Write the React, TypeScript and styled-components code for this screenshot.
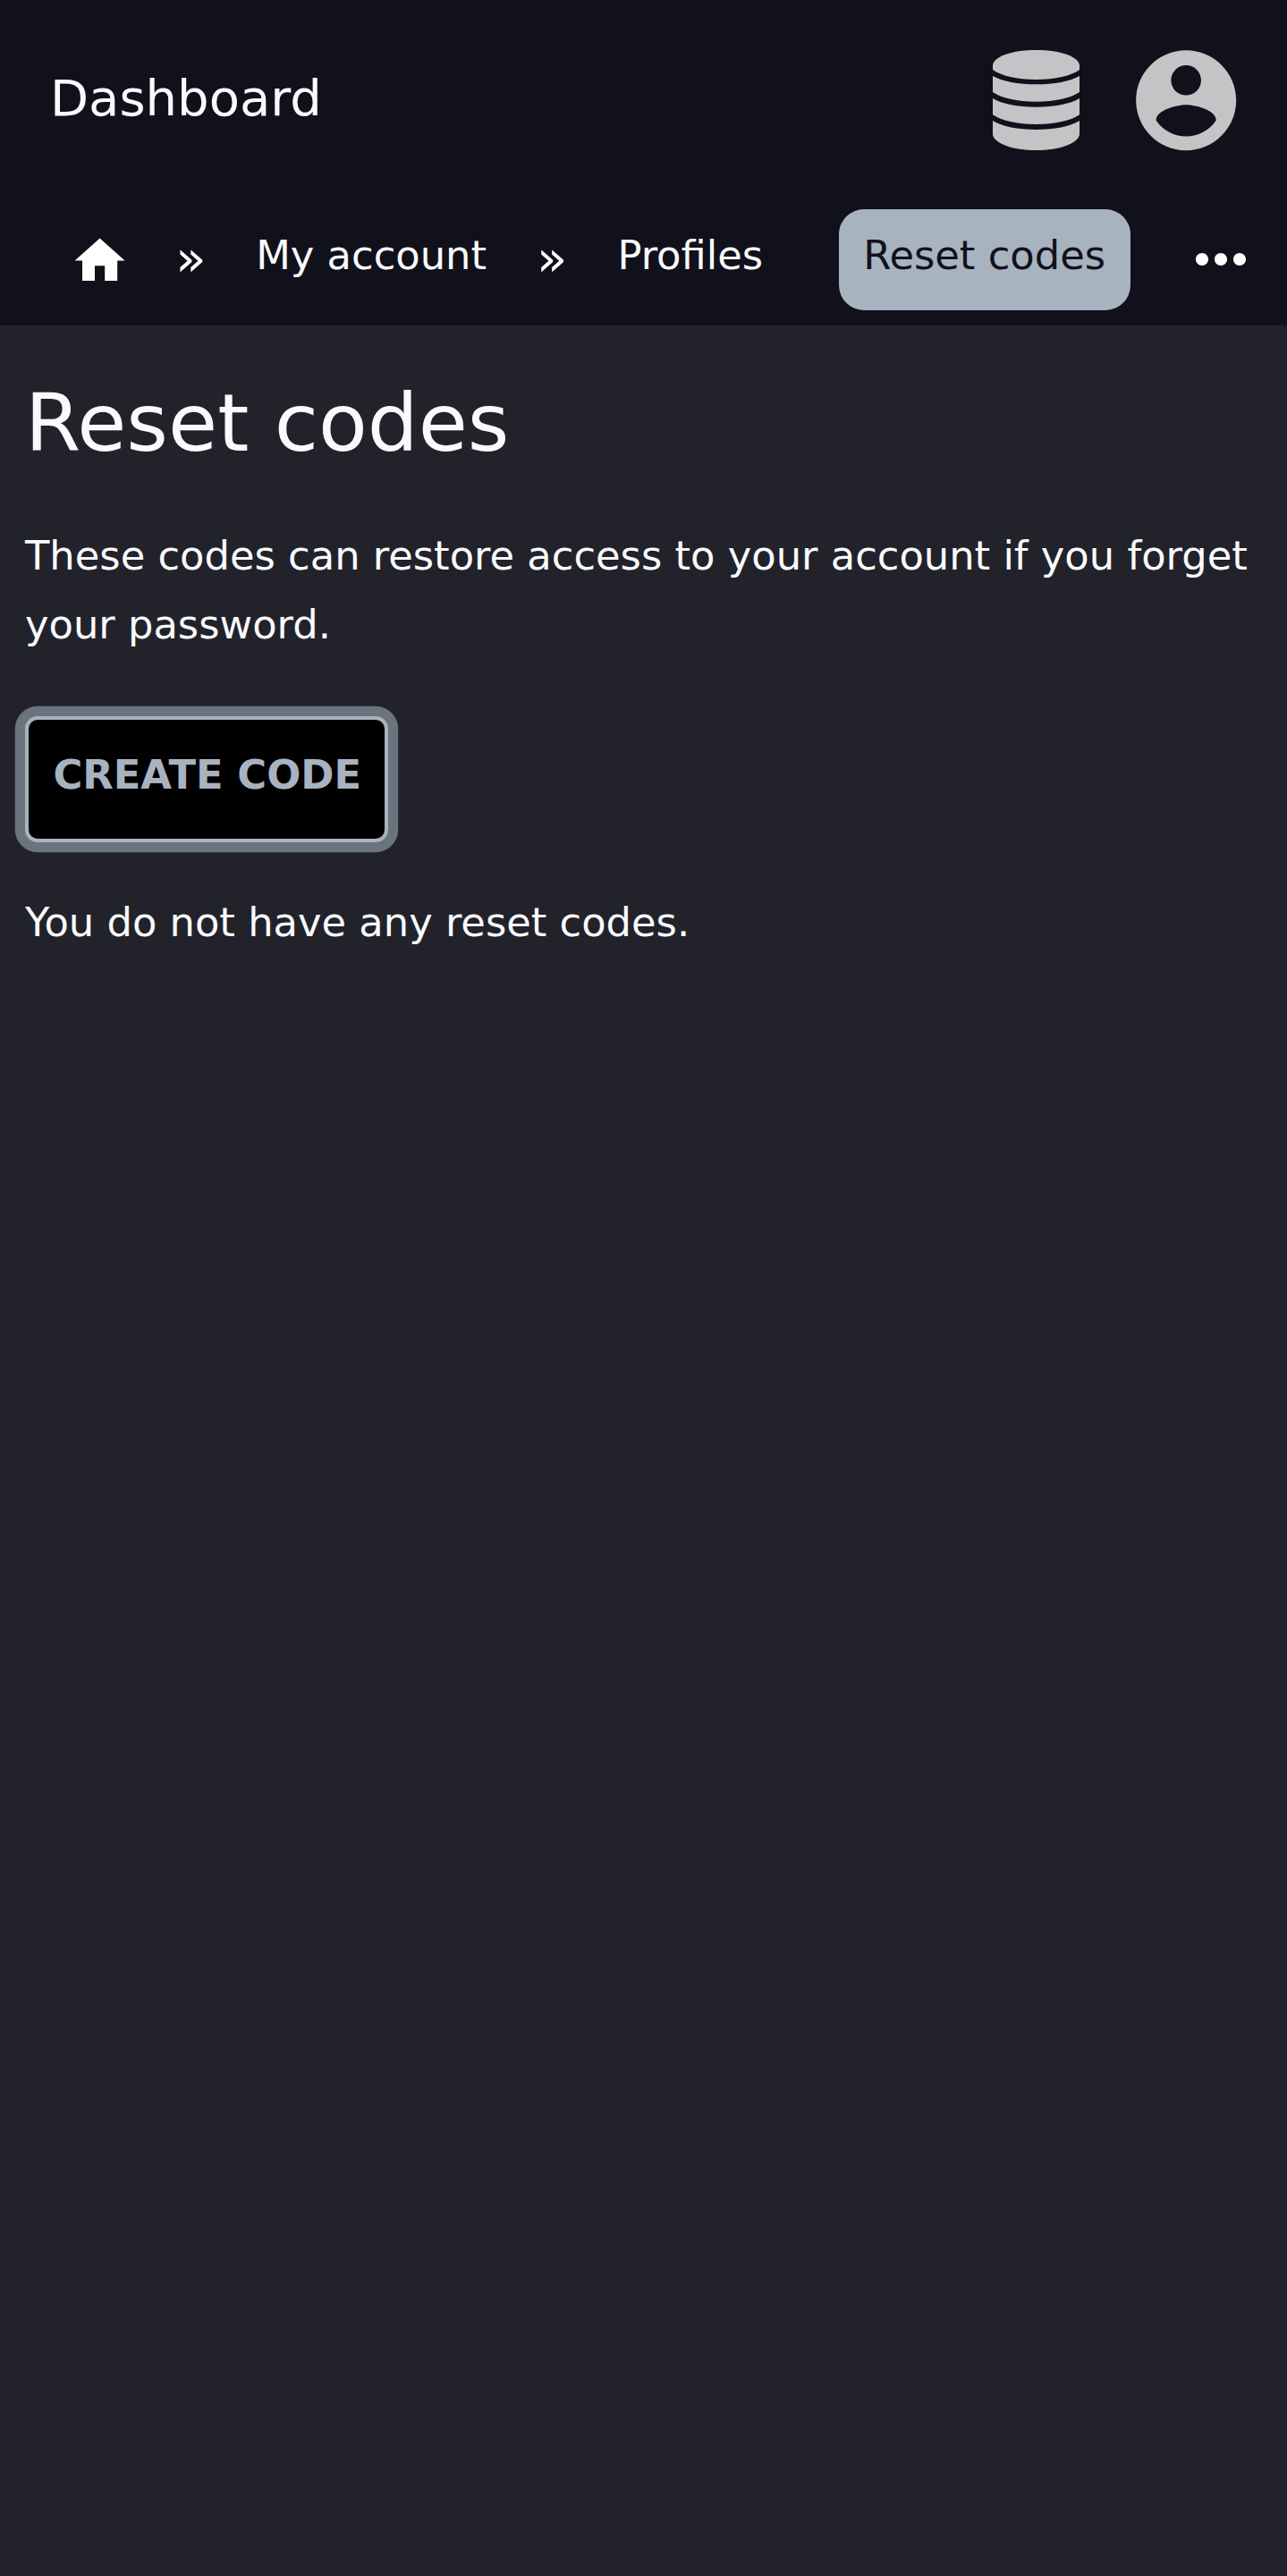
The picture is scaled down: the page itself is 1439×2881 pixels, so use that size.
import React from "react";
import styled, { createGlobalStyle } from "styled-components";

const Global = createGlobalStyle`
  html { font-size: 44.8px; }
  body {
    margin: 0;
    min-height: 100vh;
    background: #22222b;
    color: #f9fafc;
    font-family: "DejaVu Sans", sans-serif;
    line-height: 77px;
  }
  * { box-sizing: border-box; }
`;

const Header = styled.header`
  height: 364px;
  background: #11111b;
`;

const TopBar = styled.div`
  display: flex;
  align-items: center;
  justify-content: space-between;
  height: 224px;
  padding: 0 45.2px 0 56px;
`;

const Brand = styled.a`
  font-size: 56px;
  line-height: 84px;
  padding-bottom: 4px;
`;

const Actions = styled.div`
  display: flex;
  align-items: center;
  gap: 37px;
`;

const DatabaseIcon = styled.svg`
  display: block;
  width: 97px;
  height: 112px;
  margin-right: 15px;
  fill: #c4c4c6;
`;

const AccountIcon = styled.svg`
  display: block;
  width: 134.4px;
  height: 134.4px;
  fill: #c4c4c6;
`;

const UserLink = styled.a`
  display: flex;
  width: 135px;
`;

const Crumbs = styled.nav`
  display: flex;
  align-items: flex-start;
  height: 140px;
  padding: 10px 0 0 78px;
`;

const HomeIcon = styled.svg`
  display: block;
  width: 67.2px;
  height: 67.2px;
  margin-top: 24px;
  fill: #fff;
`;

const Separator = styled.span<{ $left: number }>`
  width: 35px;
  margin-left: ${(p) => p.$left}px;
  padding-top: 16px;
  font-size: 56px;
  color: #fff;
`;

const Crumb = styled.a<{ $left: number; $active?: boolean }>`
  height: 112.3px;
  margin-top: 0.3px;
  margin-left: ${(p) => p.$left}px;
  padding: ${(p) => (p.$active ? "12.7px 27.7px 0 27.3px" : "12.7px 28px 0")};
  border-radius: 28px;
  white-space: nowrap;
  color: ${(p) => (p.$active ? "#11111b" : "inherit")};
  background: ${(p) => (p.$active ? "#a8b3c0" : "transparent")};
`;

const MoreIcon = styled.svg`
  display: block;
  width: 84px;
  height: 84px;
  margin: 14px 32px 0 auto;
  fill: #fff;
`;

const Main = styled.main`
  padding: 55px 28px 0;
  font-size: 44.8px;
`;

const Title = styled.h1`
  margin: 0 0 56px;
  font-size: 89.6px;
  font-weight: 400;
  line-height: 108px;
`;

const Text = styled.p`
  margin: 0;
`;

const CreateButton = styled.button`
  display: block;
  height: 140.4px;
  margin: 64.4px 0 51.2px;
  padding: 0 25.8px 10px 27.4px;
  border: 4px solid #a8b3c0;
  border-radius: 14px;
  box-shadow: 0 0 0 11.2px #6b737d;
  background: #000;
  color: #a8b3c0;
  font: bold 44.8px "DejaVu Sans", sans-serif;
`;

export default function App() {
  return (
    <>
      <Global />
      <Header>
        <TopBar>
          <Brand>Dashboard</Brand>
          <Actions>
            <DatabaseIcon viewBox="0 0 291 336">
              <path d="M0 53C0 23 62 0 145.500 0S291 23 291 53V66C263 86 210 99 145.500 99S28 86 0 66Z" />
              <path d="M0 87C31 105 85 115 145.500 115S260 105 291 87V141C263 161 210 173 145.500 173S28 161 0 141Z" />
              <path d="M0 162C31 181 85 191 145.500 191S260 181 291 162V217C263 237 210 249 145.500 249S28 237 0 217Z" />
              <path d="M0 237C31 257 85 267 145.500 267S260 257 291 237V284C285 313 225 336 145.500 336S6 313 0 284Z" />
            </DatabaseIcon>
            <UserLink>
              <AccountIcon viewBox="0 0 24 24">
                <path d="M12 2C6.48 2 2 6.480 2 12s4.480 10 10 10 10-4.480 10-10S17.520 2 12 2zm0 3c1.660 0 3 1.340 3 3s-1.340 3-3 3-3-1.340-3-3 1.340-3 3-3zm0 14.200c-2.500 0-4.710-1.280-6-3.220.030-1.990 4-3.080 6-3.080 1.990 0 5.970 1.090 6 3.080-1.290 1.940-3.500 3.220-6 3.220z" />
              </AccountIcon>
            </UserLink>
          </Actions>
        </TopBar>
        <Crumbs>
          <HomeIcon viewBox="0 0 24 24">
            <path d="M10 20v-6h4v6h5v-8h3L12 3 2 12h3v8z" />
          </HomeIcon>
          <Separator $left={51}>»</Separator>
          <Crumb $left={27}>My account</Crumb>
          <Separator $left={28}>»</Separator>
          <Crumb $left={27.4}>Profiles</Crumb>
          <Crumb $left={56.9} $active>
            Reset codes
          </Crumb>
          <MoreIcon viewBox="0 0 24 24">
            <path d="M6 10c-1.100 0-2 .900-2 2s.900 2 2 2 2-.900 2-2-.900-2-2-2zm12 0c-1.100 0-2 .900-2 2s.900 2 2 2 2-.900 2-2-.900-2-2-2zm-6 0c-1.100 0-2 .900-2 2s.900 2 2 2 2-.900 2-2-.900-2-2-2z" />
          </MoreIcon>
        </Crumbs>
      </Header>
      <Main>
        <Title>Reset codes</Title>
        <Text>These codes can restore access to your account if you forget your password.</Text>
        <CreateButton>CREATE CODE</CreateButton>
        <Text>You do not have any reset codes.</Text>
      </Main>
    </>
  );
}
